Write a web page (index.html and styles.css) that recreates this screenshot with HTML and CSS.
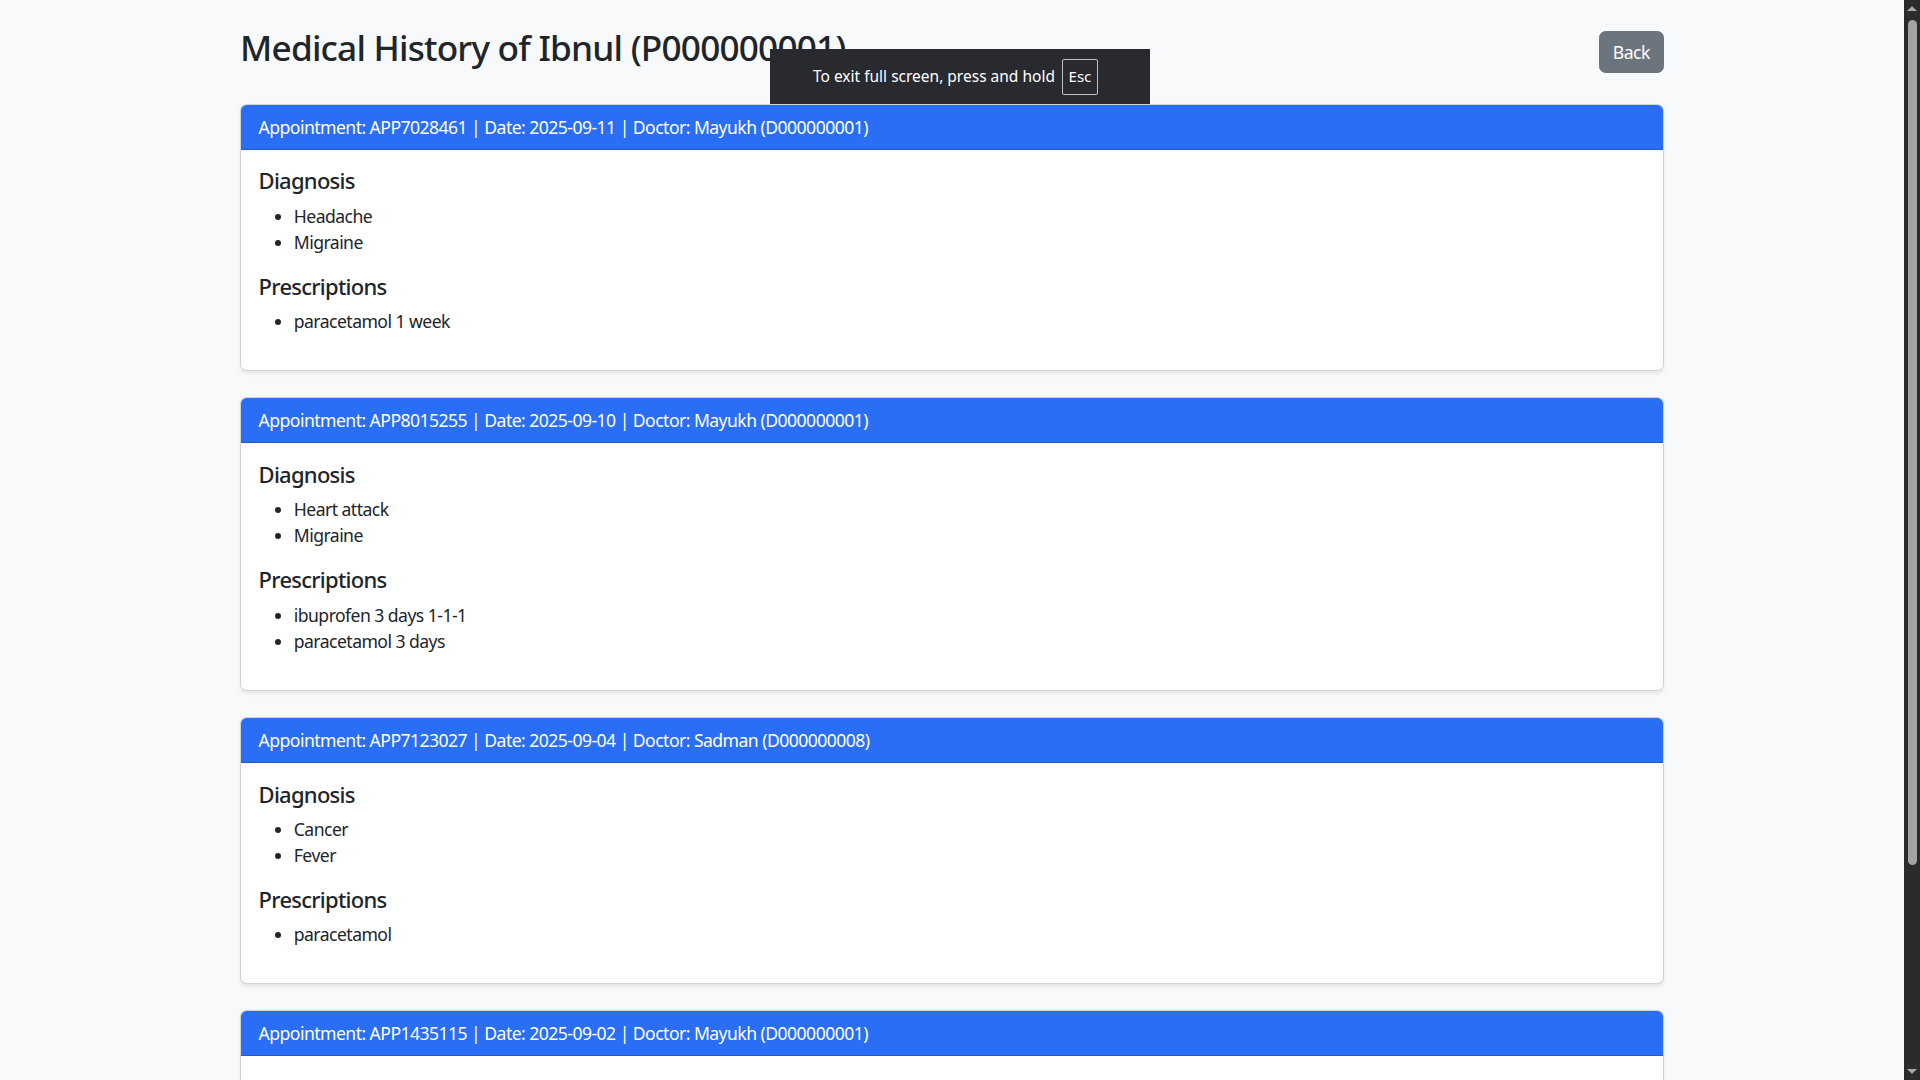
FILE: index.html
```html
<!DOCTYPE html>
<html lang="en">
<head>
<meta charset="utf-8">
<title>Medical History</title>
<link rel="stylesheet" href="styles.css">
</head>
<body>
<div class="viewport">
  <div class="page">
    <div class="container">
      <div class="title-row">
        <h2 class="title">Medical History of Ibnul (P000000001)</h2>
        <a class="btn-back" href="#">Back</a>
      </div>

      <div class="card">
        <div class="card-header">Appointment: APP7028461 | Date: 2025-09-11 | Doctor: Mayukh (D000000001)</div>
        <div class="card-body">
          <h5 class="section">Diagnosis</h5>
          <ul class="list">
            <li>Headache</li>
            <li>Migraine</li>
          </ul>
          <h5 class="section">Prescriptions</h5>
          <ul class="list">
            <li>paracetamol 1 week</li>
          </ul>
        </div>
      </div>

      <div class="card">
        <div class="card-header">Appointment: APP8015255 | Date: 2025-09-10 | Doctor: Mayukh (D000000001)</div>
        <div class="card-body">
          <h5 class="section">Diagnosis</h5>
          <ul class="list">
            <li>Heart attack</li>
            <li>Migraine</li>
          </ul>
          <h5 class="section">Prescriptions</h5>
          <ul class="list">
            <li>ibuprofen 3 days 1-1-1</li>
            <li>paracetamol 3 days</li>
          </ul>
        </div>
      </div>

      <div class="card">
        <div class="card-header">Appointment: APP7123027 | Date: 2025-09-04 | Doctor: Sadman (D000000008)</div>
        <div class="card-body">
          <h5 class="section">Diagnosis</h5>
          <ul class="list">
            <li>Cancer</li>
            <li>Fever</li>
          </ul>
          <h5 class="section">Prescriptions</h5>
          <ul class="list">
            <li>paracetamol</li>
          </ul>
        </div>
      </div>

      <div class="card">
        <div class="card-header">Appointment: APP1435115 | Date: 2025-09-02 | Doctor: Mayukh (D000000001)</div>
        <div class="card-body card-body-tail"></div>
      </div>
    </div>

    <div class="fs-toast">
      <span>To exit full screen, press and hold</span>
      <span class="key">Esc</span>
    </div>
  </div>

  <div class="scrollbar">
    <div class="sb-arrow sb-up"></div>
    <div class="sb-track"><div class="sb-thumb"></div></div>
    <div class="sb-arrow sb-down"></div>
  </div>
</div>
</body>
</html>
```

FILE: styles.css
```css
* { box-sizing: border-box; }

html, body {
  margin: 0;
  padding: 0;
  height: 100%;
}

body {
  font-family: "Noto Sans", "Open Sans", sans-serif;
  font-size: 17.6px;
  line-height: 1.5;
  letter-spacing: -0.55px;
  color: #212529;
  background: #f8f9fa;
  overflow: hidden;
}

.viewport {
  display: flex;
  height: 100vh;
}

.page {
  flex: 1;
  position: relative;
  overflow: hidden;
  background: #f8f9fa;
}

.container {
  width: 1424px;
  margin: 26.4px auto 0;
}

.title-row {
  display: flex;
  justify-content: space-between;
  align-items: center;
  margin-bottom: 26.4px;
}

.title {
  margin: 0 0 8.8px;
  font-size: 35.2px;
  font-weight: 500;
  line-height: 1.2;
  letter-spacing: -0.8px;
}

.btn-back {
  display: inline-block;
  padding: 6.6px 13.2px;
  font-size: 17.6px;
  line-height: 26.4px;
  color: #fff;
  background: #6c757d;
  border: 1.1px solid #6c757d;
  border-radius: 6.6px;
  text-decoration: none;
}

.card {
  background: #fff;
  border: 1px solid rgba(0,0,0,0.175);
  border-radius: 6.6px;
  box-shadow: 0 2.2px 4.4px rgba(0,0,0,0.075);
  margin-bottom: 26.4px;
  overflow: hidden;
}

.card-header {
  background: #2a6ef5;
  color: #fff;
  padding: 8.8px 17.6px;
  line-height: 26.4px;
  border-bottom: 1px solid rgba(0,0,0,0.175);
}

.card-body {
  padding: 17.6px;
}

.card-body-tail {
  height: 220px;
}

.section {
  margin: 0 0 8.8px;
  font-size: 22px;
  font-weight: 500;
  line-height: 1.2;
  letter-spacing: -0.75px;
}

.list {
  margin: 0 0 17.6px;
  padding-left: 35.2px;
}

.list li {
  line-height: 26.4px;
}

.fs-toast {
  position: absolute;
  left: 770px;
  top: 49px;
  width: 380px;
  height: 55px;
  background: #282a30;
  color: #fff;
  font-size: 15.5px;
  letter-spacing: 0;
  display: flex;
  align-items: center;
  gap: 7px;
  padding-left: 43px;
}

.fs-toast .key {
  display: inline-flex;
  align-items: center;
  justify-content: center;
  width: 36px;
  height: 36px;
  border: 1px solid #bfc1c5;
  border-radius: 2px;
  font-size: 15px;
}

.scrollbar {
  width: 16px;
  flex: 0 0 16px;
  background: #2b2b2b;
  display: flex;
  flex-direction: column;
  align-items: center;
}

.sb-up {
  margin-top: 6px;
  width: 0;
  height: 0;
  border-left: 5px solid transparent;
  border-right: 5px solid transparent;
  border-bottom: 5px solid #a3a3a3;
  margin-bottom: 9px;
}

.sb-down {
  width: 0;
  height: 0;
  border-left: 5px solid transparent;
  border-right: 5px solid transparent;
  border-top: 5px solid #a3a3a3;
  margin-bottom: 6px;
  margin-top: 4px;
}

.sb-track {
  flex: 1;
  width: 100%;
  display: flex;
  justify-content: center;
}

.sb-thumb {
  width: 9px;
  height: 845px;
  background: #a3a3a3;
  border-radius: 5px;
}
```
